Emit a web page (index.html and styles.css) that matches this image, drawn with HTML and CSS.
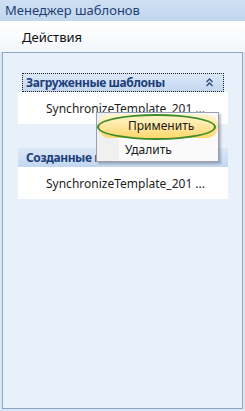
FILE: index.html
```html
<!DOCTYPE html>
<html lang="ru">
<head>
    <meta charset="UTF-8">
    <title>Менеджер шаблонов</title>
    <link rel="stylesheet" href="styles.css">
</head>
<body>

<div class="window">
    <div class="title-bar">Менеджер шаблонов</div>
    <div class="menu-bar"><span class="menu-item">Действия</span></div>

    <div class="panel">
        <div class="group">
            <div class="group-head focused">
                <span>Загруженные шаблоны</span>
                <svg class="chevron" width="9" height="9" viewBox="0 0 9 9">
                    <path d="M1.5 4 L4.5 1 L7.5 4 M1.5 8 L4.5 5 L7.5 8" fill="none" stroke="#2b4a78" stroke-width="1.4"/>
                </svg>
            </div>
            <div class="group-body">
                <div class="template">SynchronizeTemplate_201 ...</div>
            </div>
        </div>

        <div class="group">
            <div class="group-head">
                <span>Созданные шаблоны</span>
            </div>
            <div class="group-body">
                <div class="template">SynchronizeTemplate_201 ...</div>
            </div>
        </div>
    </div>

    <div class="context-menu">
        <div class="ctx-item active">Применить</div>
        <div class="ctx-item">Удалить</div>
        <div class="mark"></div>
    </div>
</div>

</body>
</html>
```

FILE: styles.css
```css
body {
    margin: 0;
    font-family: "Noto Sans", "DejaVu Sans", sans-serif;
    font-size: 12px;
    background-color: #dce6f2;
}

.window {
    position: relative;
    width: 245px;
    height: 411px;
}

.title-bar {
    height: 21px;
    line-height: 20px;
    padding-left: 5px;
    color: #1f3f6f;
    font-size: 13px;
    background: linear-gradient(#cfe0f4, #c1d6ef);
}

.menu-bar {
    height: 31px;
    display: flex;
    align-items: center;
    padding-left: 22px;
    background: linear-gradient(#ffffff, #f3f6fa);
}

.menu-item {
    font-size: 13px;
    color: #111;
}

.panel {
    margin-left: 2px;
    width: 241px;
    height: 357px;
    border: 1px solid #8da6c7;
    background-color: #e8f0fa;
    padding: 20px 14px 0 15px;
    box-sizing: border-box;
    display: flex;
    flex-direction: column;
    gap: 24px;
}

.group-head {
    height: 19px;
    display: flex;
    align-items: center;
    justify-content: space-between;
    padding: 0 8px;
    font-weight: bold;
    letter-spacing: -0.4px;
    color: #1d4079;
    background: linear-gradient(#dce8f8, #c3d7f1);
}

.group-head.focused {
    outline: 1px dotted #222;
    outline-offset: -1px;
    margin-left: 4px;
    margin-right: 4px;
    padding-left: 4px;
}

.chevron {
    margin-right: 2px;
}

.group-body {
    height: 32px;
    background-color: #fff;
    display: flex;
    align-items: center;
    padding-left: 28px;
}

.template {
    color: #1e1e1e;
    white-space: nowrap;
}

.context-menu {
    position: absolute;
    left: 96px;
    top: 112px;
    width: 121px;
    height: 48px;
    border: 1px solid #979fb0;
    background: linear-gradient(90deg, #f0f0f0 22px, #fafafa 22px);
    box-shadow: 2px 2px 2px rgba(0, 0, 0, 0.25);
    display: flex;
    flex-direction: column;
}

.ctx-item {
    height: 24px;
    line-height: 24px;
    padding-left: 28px;
    color: #1a1a1a;
}

.ctx-item.active {
    margin: 1px 0 0 1px;
    height: 24px;
    padding-left: 30px;
    border-radius: 12px;
    background: linear-gradient(#fff6d2, #ffd86e);
}

.mark {
    position: absolute;
    left: 0;
    top: 1px;
    width: 119px;
    height: 26px;
    border: 2px solid #3f8c2a;
    border-radius: 50%;
    box-sizing: border-box;
}
```
